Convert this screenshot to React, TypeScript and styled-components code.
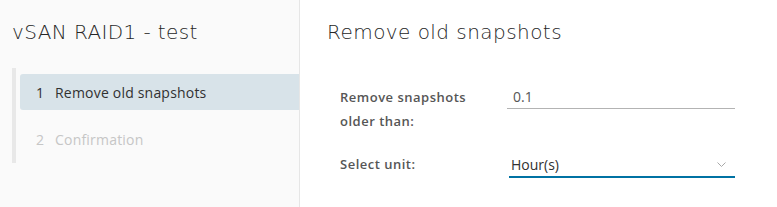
import React from "react";
import styled, { createGlobalStyle } from "styled-components";

const GlobalStyle = createGlobalStyle`
    html, body {
        margin: 0;
        padding: 0;
        background: #ffffff;
        font-family: "Open Sans", Lato, sans-serif;
    }
`;

const Page = styled.div`
    display: flex;
    height: 207px;
    overflow: hidden;
`;

const Sidebar = styled.aside`
    width: 299px;
    flex-shrink: 0;
    background: #fafafa;
    border-right: 1px solid #e6e6e6;
    padding-top: 18px;
    box-sizing: content-box;
`;

const SideTitle = styled.h2`
    margin: 0 0 22px 12px;
    font-family: "DejaVu Sans", "Open Sans", sans-serif;
    font-size: 20px;
    line-height: 28px;
    font-weight: 200;
    letter-spacing: 0.4px;
    color: #262626;
`;

const Steps = styled.ol`
    list-style: none;
    margin: 0 0 0 12px;
    padding: 6px 0 6px 4px;
    border-left: 4px solid #e8e8e8;
    display: flex;
    flex-direction: column;
    gap: 11px;
`;

const Step = styled.li<{ $active?: boolean }>`
    height: 36px;
    display: flex;
    align-items: center;
    padding-left: 16px;
    border-radius: 3px 0 0 3px;
    font-size: 14px;
    letter-spacing: 0.2px;
    color: ${(p) => (p.$active ? "#313131" : "#c6c6c6")};
    background: ${(p) => (p.$active ? "#d8e3e9" : "transparent")};
`;

const StepNum = styled.span`
    width: 19px;
`;

const Main = styled.main`
    flex: 1;
    padding: 18px 0 0 27px;
`;

const MainTitle = styled.h1`
    margin: 0;
    font-family: "DejaVu Sans", "Open Sans", sans-serif;
    font-size: 20px;
    line-height: 28px;
    font-weight: 200;
    letter-spacing: 0.45px;
    color: #262626;
`;

const Form = styled.div`
    margin: 39px 0 0 13px;
    display: grid;
    grid-template-columns: 167px 228px;
    row-gap: 19px;
`;

const Label = styled.label`
    font-size: 13px;
    line-height: 24px;
    font-weight: 600;
    letter-spacing: 0.5px;
    color: #565656;
`;

const TextInput = styled.div`
    height: 23px;
    border-bottom: 1px solid #b3b3b3;
    padding-left: 6px;
    font-size: 14px;
    line-height: 24px;
    color: #565656;
`;

const Select = styled.div`
    height: 24px;
    margin-left: 2px;
    border-bottom: 2px solid #0072a3;
    padding: 0 9px 0 2px;
    display: flex;
    align-items: center;
    justify-content: space-between;
    font-size: 14px;
    color: #313131;
`;

const Chevron = () => (
    <svg width="9" height="5" viewBox="0 0 9 5" fill="none">
        <path d="M0.5 0.5 L4.5 4.5 L8.5 0.5" stroke="#a8a8a8" strokeWidth="1" />
    </svg>
);

export default function App() {
    return (
        <>
            <GlobalStyle />
            <Page>
                <Sidebar>
                    <SideTitle>vSAN RAID1 - test</SideTitle>
                    <Steps>
                        <Step $active>
                            <StepNum>1</StepNum>Remove old snapshots
                        </Step>
                        <Step>
                            <StepNum>2</StepNum>Confirmation
                        </Step>
                    </Steps>
                </Sidebar>
                <Main>
                    <MainTitle>Remove old snapshots</MainTitle>
                    <Form>
                        <Label>
                            Remove snapshots
                            <br />
                            older than:
                        </Label>
                        <TextInput>0.1</TextInput>
                        <Label>Select unit:</Label>
                        <Select>
                            Hour(s)
                            <Chevron />
                        </Select>
                    </Form>
                </Main>
            </Page>
        </>
    );
}
